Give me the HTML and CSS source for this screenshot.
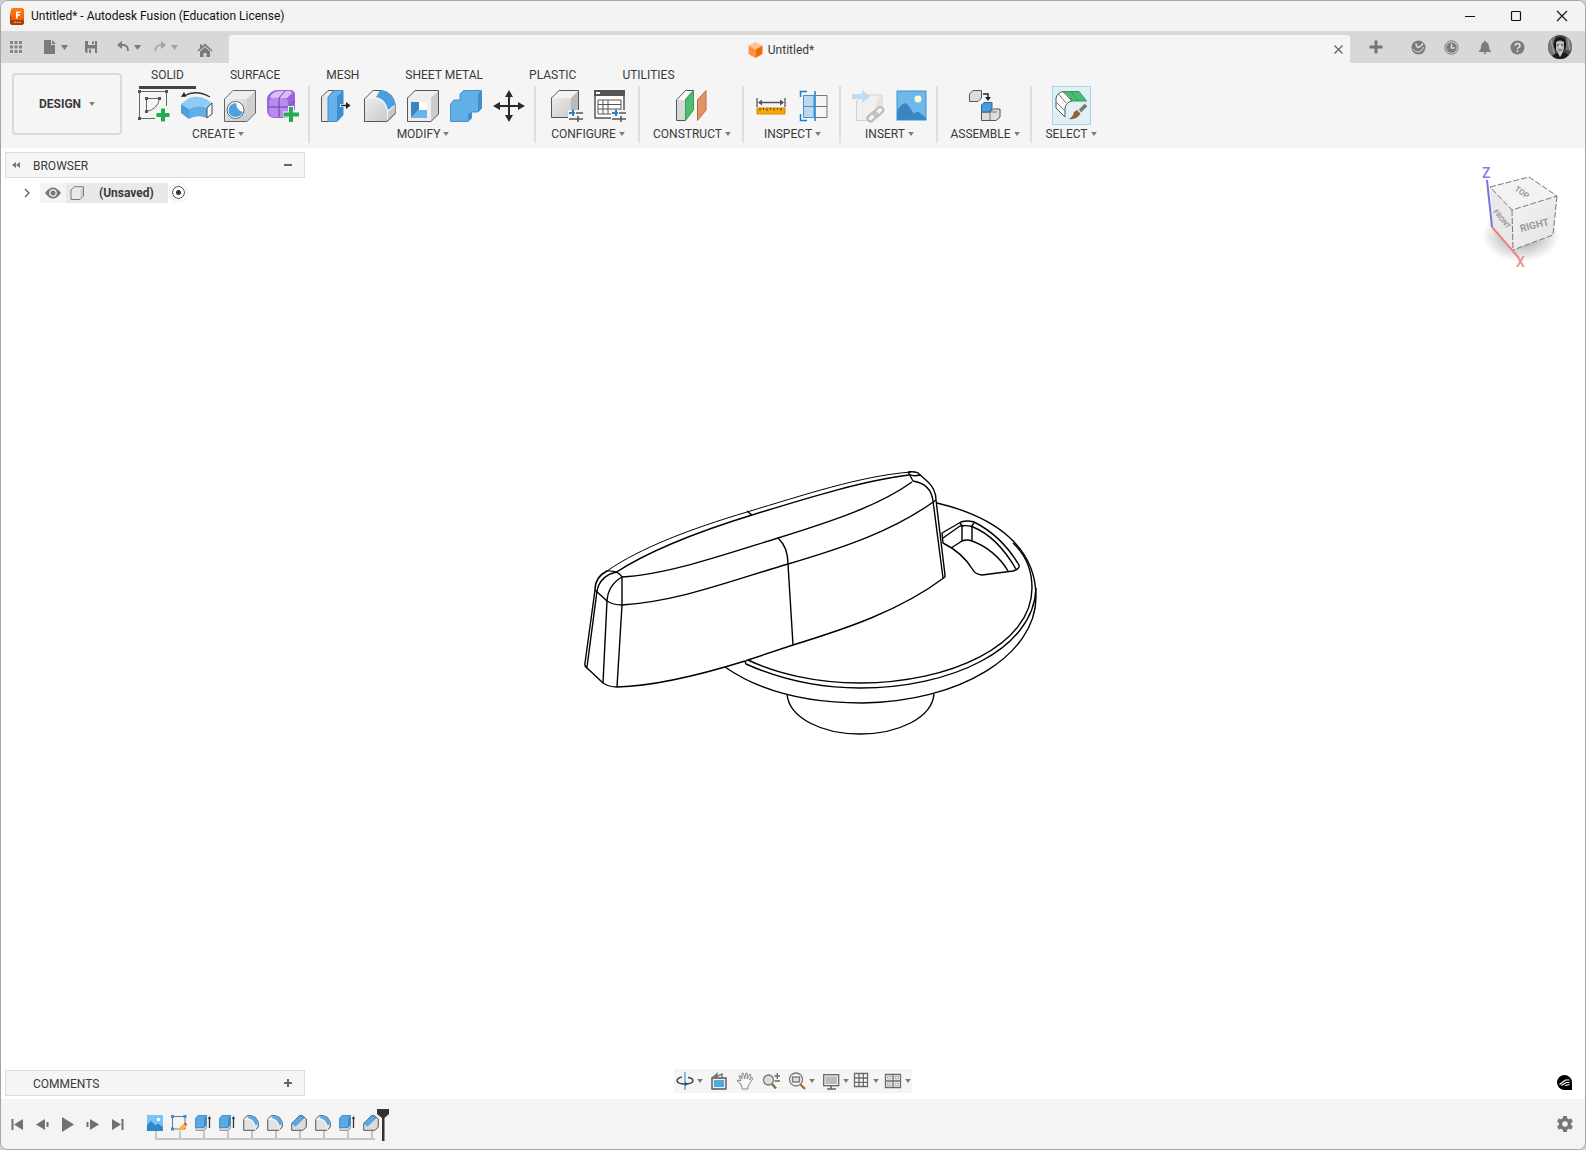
FILE: index.html
```html
<!DOCTYPE html>
<html lang="en">
<head>
<meta charset="utf-8">
<title>Untitled* - Autodesk Fusion (Education License)</title>
<link rel="stylesheet" href="styles.css">
</head>
<body>
<svg class="defs" aria-hidden="true">
  <defs>
    <linearGradient id="orange" x1="0" y1="0" x2="0" y2="1"><stop offset="0" stop-color="#ff7a0f"/><stop offset="1" stop-color="#f06000"/></linearGradient>
    <linearGradient id="metal" x1="0" y1="0" x2="1" y2="1"><stop offset="0" stop-color="#eeeeee"/><stop offset="1" stop-color="#c9c9c9"/></linearGradient>
    <linearGradient id="face" x1="0" y1="0" x2="1" y2="1"><stop offset="0" stop-color="#f4f4f4"/><stop offset="1" stop-color="#e2e2e2"/></linearGradient>
    <radialGradient id="shade"><stop offset="0" stop-color="#000" stop-opacity=".4"/><stop offset=".6" stop-color="#000" stop-opacity=".16"/><stop offset="1" stop-color="#000" stop-opacity="0"/></radialGradient>
    <symbol id="caret" viewBox="0 0 7 5"><path d="M0 0H7L3.500 5Z" fill="currentColor"/></symbol>
    <symbol id="t-extrude" viewBox="0 0 16 16"><path d="M1 13L3.500 10.500H12L11 14L9 15.500H1Z" fill="#d0d0d0" stroke="#777" stroke-width=".6"/><path d="M.5 3.500L3 .5H11.500V9L9 12.500H.5Z" fill="#5aaae4" stroke="#2f80bd" stroke-width=".8"/><path d="M9 3.500L11.500 .5V9L9 12.500Z" fill="#3b8bc8"/><path d="M14.500 3V13" stroke="#333" stroke-width="1.300"/><path d="M12.800 4L14.500 .8L16 4Z" fill="#333"/></symbol>
    <symbol id="t-fillet" viewBox="0 0 16 16"><path d="M.7 4L4 .7H8Q15 2 15.300 9V12L12 15.300H.7Z" fill="#e3e3e3" stroke="#555"/><path d="M.7 4H4Q11 4.500 12 11.500V15.300" fill="none" stroke="#fafafa"/><path d="M5.500 .8H8.500Q14.500 2 15.300 8.500L12.500 10.500Q11 4.500 5 3Z" fill="#5aaae4"/></symbol>
    <symbol id="t-chamfer" viewBox="0 0 16 16"><path d="M.7 8.500L8.500 .7H11.500L15.300 4V12L12 15.300H.7Z" fill="#dadada" stroke="#555"/><path d="M1 8L8.500 .8L13 2.800L4.500 11Z" fill="#5aaae4" stroke="#2f80bd" stroke-width=".7"/></symbol>
    <symbol id="t-image" viewBox="0 0 16 16"><path d="M0 0H16V16H0Z" fill="#7cc3f5"/><circle cx="11.500" cy="4.500" r="1.700" fill="#fff"/><path d="M0 10L4 6L8.500 10.500L11 8.500L16 12V16H0Z" fill="#2d88c9"/></symbol>
    <symbol id="t-sketch" viewBox="0 0 16 16"><path d="M1.500 1.500H14V14H1.500Z" fill="none" stroke="#777"/><path d="M0 0H3V3H0ZM12.500 0H15.500V3H12.500ZM0 12.500H3V15.500H0Z" fill="#3a90d0"/><path d="M7.500 15.500L8.500 12.500L13 8.500L15.500 11L11 15Z" fill="#f7b52c"/><path d="M13 8.500L14.500 7.500L16 9.500L15 11Z" fill="#e5343a"/></symbol>
  </defs>
</svg>

<div class="window">
  <header class="titlebar">
    <svg class="app-icon" viewBox="0 0 14 17"><path d="M1 1.500L2.500 0H13V13L1 14Z" fill="url(#orange)"/><path d="M0 2V15.500L1.500 17H12.500L14 15.500V12H1.500Z" fill="#a83d08"/><path d="M2 1H14V12H2Z" fill="url(#orange)"/><path d="M6 3.500H10.500V5H7.700V6.300H10V7.800H7.700V10.500H6Z" fill="#fff"/><path d="M4 14.300H11" stroke="#f1a273" stroke-width="1.200" stroke-dasharray="2 .6"/></svg>
    <h1 class="titlebar-text">Untitled* - Autodesk Fusion (Education License)</h1>
    <div class="window-controls">
      <button aria-label="Minimize"><svg width="12" height="12"><path d="M1 6.500H11" stroke="#111"/></svg></button>
      <button aria-label="Maximize"><svg width="12" height="12"><rect x="1.500" y="1.500" width="9" height="9" rx="1" fill="none" stroke="#111" stroke-width="1.200"/></svg></button>
      <button aria-label="Close window"><svg width="12" height="12"><path d="M1 1L11 11M11 1L1 11" stroke="#111" stroke-width="1.100"/></svg></button>
    </div>
  </header>

  <div class="tabbar">
    <div class="quick">
      <button aria-label="Show data panel"><svg width="14" height="14" fill="#848484"><path d="M1 1h3v3h-3zM5.500 1h3v3h-3zM10 1h3v3h-3zM1 5.500h3v3h-3zM5.500 5.500h3v3h-3zM10 5.500h3v3h-3zM1 10h3v3h-3zM5.500 10h3v3h-3zM10 10h3v3h-3z"/></svg></button>
      <button aria-label="File"><svg width="14" height="14"><path d="M1 0H8V5H12V14H1Z" fill="#7b7b7b"/><path d="M9 0L13 4H9Z" fill="#7b7b7b"/></svg><svg class="caret"><use href="#caret"/></svg></button>
      <button aria-label="Save"><svg width="14" height="14"><path d="M1 1H13V13H2.500L1 11.500Z" fill="#7b7b7b"/><path d="M4 1H11V5H4ZM3.500 8.500H11V13H3.500Z" fill="#d9d9d9"/><path d="M8 1.500H10V4H8ZM5 9.500H7V13H5Z" fill="#7b7b7b"/></svg></button>
      <button aria-label="Undo"><svg width="14" height="12"><path d="M3 4H8Q12 4.500 12 10" fill="none" stroke="#7b7b7b" stroke-width="1.800"/><path d="M6 0V8L1 4Z" fill="#7b7b7b"/></svg><svg class="caret"><use href="#caret"/></svg></button>
      <button class="faded" aria-label="Redo"><svg width="14" height="12"><path d="M11 4H7Q3 4.500 2 10" fill="none" stroke="#a3a3a3" stroke-width="1.600"/><path d="M8 0V8L13 4Z" fill="#a3a3a3"/></svg><svg class="caret"><use href="#caret"/></svg></button>
      <button class="home" aria-label="Home"><svg width="16" height="15"><path d="M8 .5L15.500 7.500L14.500 8.500L8 3L1.500 8.500L.5 7.500L3 5V1.500H5V3.300Z" fill="#7b7b7b"/><path d="M3 8.500L8 4L13 8.500V14H9.500V10H6.500V14H3Z" fill="#7b7b7b"/></svg></button>
    </div>
    <div class="doc-tab">
      <div class="doc-name"><svg width="15" height="16"><path d="M7.500 0L14.500 3.500L7.500 7.500L.5 3.500Z" fill="#ffc299"/><path d="M.5 3.500L7.500 7.500V16L.5 12Z" fill="#ff9146"/><path d="M14.500 3.500L7.500 7.500V16L14.500 12Z" fill="#f66b00"/></svg><span>Untitled*</span></div>
      <button aria-label="Close tab"><svg width="11" height="11"><path d="M1.500 1.500L9.500 9.500M9.500 1.500L1.500 9.500" stroke="#666" stroke-width="1.300"/></svg></button>
    </div>
    <div class="account">
      <button class="new-tab" aria-label="New design"><svg width="14" height="14"><path d="M7 .5V13.500M.5 7H13.500" stroke="#757575" stroke-width="3"/></svg></button>
      <button aria-label="Extensions"><svg width="15" height="15"><circle cx="7.500" cy="7.500" r="7" fill="#7b7b7b"/><path d="M5 3.500Q5 7 8 7.500L12 4" fill="none" stroke="#d9d9d9" stroke-width="1.600"/><path d="M8 7L12.500 2.500M2 9Q4 12.500 8 12Q12 11 12.500 7" fill="none" stroke="#d9d9d9"/></svg></button>
      <button aria-label="Job status"><svg width="15" height="15"><circle cx="7.500" cy="7.500" r="6.700" fill="none" stroke="#7b7b7b"/><circle cx="7.500" cy="7.500" r="5.300" fill="#7b7b7b"/><path d="M7.500 3.500V8H11" fill="none" stroke="#d9d9d9" stroke-width="1.500"/></svg></button>
      <button aria-label="Notifications"><svg width="14" height="15"><path d="M7 .5Q8 .5 8 2Q11 3 11 7Q11 10 13 11V12H1V11Q3 10 3 7Q3 3 6 2Q6 .5 7 .5ZM5.500 12.500H8.500Q8.500 14 7 14T5.500 12.500Z" fill="#7b7b7b"/></svg></button>
      <button aria-label="Help"><svg width="15" height="15"><circle cx="7.500" cy="7.500" r="7" fill="#7b7b7b"/><path d="M5 5.800Q5.200 3.500 7.500 3.500T10 5.700Q10 7 8.500 7.600Q7.500 8 7.500 9.300" fill="none" stroke="#e4e4e4" stroke-width="1.500"/><circle cx="7.500" cy="11.300" r="1" fill="#e4e4e4"/></svg></button>
      <button class="avatar" aria-label="My profile"><svg width="24" height="24" viewBox="0 0 24 24"><clipPath id="round"><circle cx="12" cy="12" r="12"/></clipPath><g clip-path="url(#round)"><path d="M0 0H24V24H0Z" fill="#4b4b4b"/><path d="M0 2H7V20H0ZM18 3H24V15H18Z" fill="#777"/><path d="M3 5L6 18M20 4L22 16" stroke="#aaa"/><path d="M6 13Q4 3 11 2Q19 1 18 12L16 16H8Z" fill="#171717"/><path d="M8 7Q12 4 16 7L16 14L14 18L11 19L8 15Z" fill="#b9b9b9"/><path d="M8.500 10H11M13 10H15.500M10.500 15H13.500" stroke="#444"/><path d="M12 10V13" stroke="#eee"/><path d="M3 24Q5 18 10 18L12 20L15 17Q21 18 22 24Z" fill="#1c1c1c"/><path d="M10 18L12 22L15 17Z" fill="#ccc"/></g></svg></button>
    </div>
  </div>

  <div class="ribbon">
    <button class="workspace">DESIGN<svg class="caret"><use href="#caret"/></svg></button>
    <div class="ribbon-main">
      <nav class="ribbon-tabs">
        <button class="active">SOLID</button><button>SURFACE</button><button>MESH</button><button>SHEET METAL</button><button>PLASTIC</button><button>UTILITIES</button>
      </nav>
      <div class="groups">
        <section class="group four">
          <div class="tools">
            <button aria-label="Create sketch"><svg class="tool"><path d="M1.500 1.500H28.500V16M1.500 1.500V28.500H17" fill="none" stroke="#666"/><path d="M8.500 8.500H21.500M8.500 8.500V21.500Q20 19 21.500 8.500" fill="none" stroke="#666"/><path d="M0 0h3v3h-3zM27 0h3v3h-3zM0 27h3v3h-3zM7 7h3v3h-3zM20 7h3v3h-3zM7 20h3v3h-3z" fill="#555"/><path d="M25 17V32M17 25H32" stroke="#f5f5f5" stroke-width="6"/><path d="M25 18.500V31.500M18.500 25H31.500" stroke="#22ad52" stroke-width="4"/></svg></button>
            <button aria-label="Revolve"><svg class="tool"><path d="M0 14L8 8Q17 5 25 9L31 13L26 18Q15 14 8 19Z" fill="#8fcbf5"/><path d="M0 14L8 19V29L0 23Z" fill="#4d9fdb"/><path d="M8 19Q16 14 26 18V28Q16 24 8 29Z" fill="#5fafe7"/><path d="M26 18L31 13V24L26 28Z" fill="#fff" stroke="#444"/><path d="M3 6Q15-1 29 7" fill="none" stroke="#333" stroke-width="1.300"/><path d="M0 7L3 2L5.500 6.500Z" fill="#222"/></svg></button>
            <button aria-label="Hole"><svg class="tool"><path d="M.5 9L9 .5H31.500V23L23 31.500H.5Z" fill="#efefef"/><path d="M23 9L31.500 .5V23L23 31.500Z" fill="#d0d0d0"/><path d="M.5 9H23V31.500H.5Z" fill="url(#metal)"/><path d="M.5 9L9 .5H31.500V23L23 31.500H.5Z" fill="none" stroke="#666"/><circle cx="11.500" cy="20" r="8.500" fill="#fff" stroke="#666"/><path d="M12 13Q13 21 19 22Q17 27 11 27Q4.500 26 4.500 20Q5 13.500 12 13Z" fill="#4ba3e2"/></svg></button>
            <button aria-label="Create form"><svg class="tool"><path d="M0 8Q3 0 11 0H24Q29 1 28 7V19Q25 28 18 28H7Q0 27 0 20Z" fill="#9a66d9"/><path d="M4 5Q8 1 13 1H23Q27 2 23 5L20 8H3Z" fill="#d9bdf8"/><path d="M2 12Q2 8 7 8H16Q21 8 21 13V20Q21 27 16 27H8Q2 27 2 22Z" fill="#b98bec"/><path d="M1 17H21L28 11M12 27V8L18 1" fill="none" stroke="#6f39b0"/><path d="M24 16V32M16 24.500H32" stroke="#f5f5f5" stroke-width="6"/><path d="M24 17V32M16.500 24.500H32" stroke="#22ad52" stroke-width="4"/></svg></button>
          </div>
          <button class="group-label">CREATE<svg class="caret"><use href="#caret"/></svg></button>
        </section>
        <section class="group five">
          <div class="tools">
            <button aria-label="Press pull"><svg class="tool"><path d="M.5 7L7 .5H13L8 7V31.500H.5Z" fill="#e8e8e8" stroke="#555"/><path d="M7 7L13 .5H22V25L16 31.500H7Z" fill="#67b0e8" stroke="#3e8cc7"/><path d="M16 7L22 .5V25L16 31.500Z" fill="#3b8ed0"/><path d="M19 15.500H26" stroke="#fff" stroke-width="3"/><path d="M20 15.500H27" stroke="#222" stroke-width="1.500"/><path d="M25 12L29.500 15.500L25 19Z" fill="#222"/></svg></button>
            <button aria-label="Fillet"><svg class="tool"><path d="M.5 9L9 .5H17Q29 2 31.500 16V23L23 31.500H.5Z" fill="#f3f3f3" stroke="#555"/><path d="M.5 9H10Q22 10 23 23V31.500H.5Z" fill="url(#metal)"/><path d="M24 22L31.500 15V23L24 31Z" fill="#c9c9c9"/><path d="M.5 9V31.500H23L31.500 23" fill="none" stroke="#555"/><path d="M16 .5Q29 1 31.500 14L24 20Q22 9 12 7Z" fill="#4b9fdf"/></svg></button>
            <button aria-label="Shell"><svg class="tool"><path d="M.5 8L8 .5H31.500V24L24 31.500H.5Z" fill="#eee"/><path d="M24 8L31.500 .5V24L24 31.500Z" fill="#ccc"/><path d="M.5 8L8 .5H31.500V24L24 31.500H.5Z" fill="none" stroke="#555"/><path d="M4 12H20V28H4Z" fill="#fff"/><path d="M4 12H12V20L4 28Z" fill="#3984c2"/><path d="M4 28L11 20H20V28Z" fill="#66b6ed"/></svg></button>
            <button aria-label="Combine"><svg class="tool"><path d="M.5 14L4 10H10V4L13.500 .5H31.500V18.500L28 22H21.500V28L18 31.500H.5Z" fill="#62aee7" stroke="#4593cf"/><path d="M28 4L31.500 .5V18.500L28 22ZM18 24L21.500 22V28L18 31.500Z" fill="#418fcd"/></svg></button>
            <button aria-label="Move"><svg class="tool"><path d="M16 5V27M5 16H27" stroke="#2b2b2b" stroke-width="2"/><path d="M16 0L20 7H12ZM16 32L20 25H12ZM0 16L7 12V20ZM32 16L25 12V20Z" fill="#2b2b2b"/></svg></button>
          </div>
          <button class="group-label">MODIFY<svg class="caret"><use href="#caret"/></svg></button>
        </section>
        <section class="group wide">
          <div class="tools">
            <button aria-label="Configure model"><svg class="tool"><path d="M.5 8L8 .5H27.500V20L20 27.500H.5Z" fill="#f4f4f4"/><path d="M.5 8H20V27.500H.5Z" fill="url(#metal)"/><path d="M20 8L27.500 .5V20L20 27.500Z" fill="#bbb"/><path d="M.5 8L8 .5H27.500V20L20 27.500H.5Z" fill="none" stroke="#555"/><path d="M17 23H33M17 29H33" stroke="#f5f5f5" stroke-width="6"/><path d="M18 23H24" stroke="#2784cc" stroke-width="2"/><path d="M22 19.500V26" stroke="#2784cc" stroke-width="2"/><path d="M25 23H32M18 29H32M27 26V32" stroke="#555" stroke-width="1.600"/></svg></button>
            <button aria-label="Configuration table"><svg class="tool"><path d="M1 1H30V28H1Z" fill="#fff" stroke="#555" stroke-width="1.500"/><path d="M0 0H31V6H0Z" fill="#555"/><path d="M2 2H6V4H2Z" fill="#fff"/><path d="M4 10H27V24H4ZM4 14.500H27M4 19H27M9 10V24M14 10V24" fill="none" stroke="#555"/><path d="M17 23H33M17 29H33" stroke="#f5f5f5" stroke-width="6"/><path d="M18 23H24M22 19.500V26" stroke="#2784cc" stroke-width="2"/><path d="M25 23H32M18 29H32M27 26V32" stroke="#555" stroke-width="1.600"/></svg></button>
          </div>
          <button class="group-label">CONFIGURE<svg class="caret"><use href="#caret"/></svg></button>
        </section>
        <section class="group wide">
          <div class="tools">
            <button aria-label="Offset plane"><svg class="tool"><path d="M.500 10L9.500 .5H17.500L9 10V30.500H.5Z" fill="#fafafa" stroke="#555"/><path d="M1 10H9V30H1Z" fill="#d8d8d8"/><path d="M9.500 10L17.500 .5V20L9.500 30.500Z" fill="#4dbd74" stroke="#339f58"/><path d="M21.500 10L30 .5V20L21.500 30.500Z" fill="#e39465" stroke="#bd6c3d"/></svg></button>
          </div>
          <button class="group-label">CONSTRUCT<svg class="caret"><use href="#caret"/></svg></button>
        </section>
        <section class="group">
          <div class="tools">
            <button aria-label="Measure"><svg class="tool"><path d="M2 8V17M30 8V17M4 12.500H28" stroke="#555" stroke-width="1.300"/><path d="M3 12.500L7 9.500V15.500ZM29 12.500L25 9.500V15.500Z" fill="#555"/><path d="M2 18H30V24H2Z" fill="#f7a708" stroke="#d68b00"/><path d="M5 18v3M8.500 18v2M12 18v3M15.500 18v2M19 18v3M22.500 18v2M26 18v3" stroke="#6b4a00"/></svg></button>
            <button aria-label="Section analysis"><svg class="tool"><path d="M17 5.500H29V27.500H17M17 16.500H29" fill="none" stroke="#777"/><path d="M5 5H16V28H5Z" fill="#b9d8f1"/><path d="M5.500 5.500H16V27.500H5.500ZM5 16.500H16" fill="none" stroke="#4a8fc8"/><path d="M9 1.500H2.500V7M2.500 24V30.500H9M17 1V31" fill="none" stroke="#1581cf" stroke-width="1.500"/></svg></button>
          </div>
          <button class="group-label">INSPECT<svg class="caret"><use href="#caret"/></svg></button>
        </section>
        <section class="group">
          <div class="tools">
            <button aria-label="Insert component" class="dim"><svg class="tool"><path d="M4.500 11L11 5H30V22L24 30.500H4.500Z" fill="#eee" stroke="#bbb"/><path d="M24 11L30 5V22L24 30Z" fill="#dadada"/><path d="M0 4H10V0L18 6.500L10 13V9H0Z" fill="#9dcdf2"/><path d="M18 31L32 19" stroke="#f5f5f5" stroke-width="11"/><g fill="none" stroke="#999" stroke-width="2.200"><rect x="15" y="24" width="11" height="6" rx="3" transform="rotate(-42 20 27)"/><rect x="21" y="19" width="11" height="6" rx="3" transform="rotate(-42 26 22)"/></g></svg></button>
            <button aria-label="Canvas image"><svg class="tool"><path d="M2 1H31V30H2Z" fill="#6fb8ec"/><circle cx="23" cy="9" r="3.500" fill="#fff9d3"/><path d="M2 21Q8 11 12 14Q15 17 17 21L19 24Q22 20 25 23L31 28V30H2Z" fill="#3786bf"/><rect x="2" y="1" width="29" height="29" fill="none" stroke="#3b93d2"/></svg></button>
          </div>
          <button class="group-label">INSERT<svg class="caret"><use href="#caret"/></svg></button>
        </section>
        <section class="group narrow">
          <div class="tools">
            <button aria-label="New component"><svg class="tool"><path d="M.5 4L4 .5H12.500V8L9 11.500H.5Z" fill="#ddd" stroke="#555"/><path d="M14 4H19V8" fill="none" stroke="#222" stroke-width="1.500"/><path d="M16 7H22L19 11Z" fill="#222"/><path d="M12.500 22H21L24.500 19H31V27L27 30.500H12.500Z" fill="#ddd" stroke="#555"/><path d="M21 22V30M21 22H28" stroke="#777"/><path d="M12.500 15L15 12.500H23V19L20.500 22H12.500Z" fill="#4b9bdc" stroke="#2e6999"/></svg></button>
          </div>
          <button class="group-label">ASSEMBLE<svg class="caret"><use href="#caret"/></svg></button>
        </section>
        <section class="group last">
          <div class="tools">
            <button aria-label="Select" class="selected"><svg class="tool"><path d="M8 1.500Q2 3 1 8V18L10 27V18Q11 12 17 11Z" fill="#fff" stroke="#555"/><path d="M1 12L10 21M3.500 4L11 13" stroke="#777"/><path d="M8 1.500H24L31.500 11H17Q14 4 8 1.500Z" fill="#4abd75" stroke="#329b58"/><path d="M16 1.500L24 11" stroke="#329b58"/><path d="M31 15L25 21" stroke="#777" stroke-width="3.500"/><path d="M22 20L25.500 23.500Q22 30 14 29Q18 27 19 22Z" fill="#936430"/></svg></button>
          </div>
          <button class="group-label">SELECT<svg class="caret"><use href="#caret"/></svg></button>
        </section>
      </div>
    </div>
  </div>

  <main class="canvas">
    <svg class="model" viewBox="580 460 460 280" role="img" aria-label="Knob body">
      <g fill="none" stroke="#000" stroke-width="1.400" stroke-linejoin="round">
        <path stroke-width="1" d="M607 571C640 548 690 529 747 512S860 476 911 472"/>
        <path d="M615 573C650 550 700 531 752 515S865 480 909 475M747 511L752 515"/>
        <path d="M622 577C665 575 720 556 778 538S880 505 912 482"/>
        <path d="M595 590L607 601Q613 605 622 605C680 601 730 581 788 564S895 530 936 500"/>
        <path d="M606 571Q618 570 622 577L622 605L617 687M607 571Q595 577 595 590L585 663Q584 666 588 669"/>
        <path d="M616 572Q600 576 597 591L587 667M622 577Q608 585 607 601L603 683"/>
        <path d="M585 666L603 683Q609 687 617 687C655 686 700 675 745 661"/>
        <path d="M748 660L793 645C845 629 900 611 945 577"/>
        <path d="M778 538Q788 547 788 564L793 645"/>
        <path d="M908 472Q917 471 919 474L927 481Q936 489 936 500L945 575V577M908 472L913 481Q931 484 933 501L943 578M909 474Q913 477 920 475"/>
        <path d="M937 503C1000 518 1036 550 1036 597C1036 655 960 702 862 703C800 703 755 688 725 667"/>
        <path d="M1013 543C1028 557 1032 572 1032 588C1032 645 950 683 860 683C815 683 775 673 748 660"/>
        <path d="M1036 588C1034 650 950 688 860 688C815 688 775 677 746 664Q744 661 748 660"/>
        <path d="M787 694C789 718 822 734 860 734S932 718 934 694"/>
        <path d="M942 533L961 522Q967 520 974 522C990 530 1007 545 1019 565Q1020 569 1013 571L982 575Q975 574 973 570Q963 553 943 543Z"/>
        <path d="M943 538L960 526Q967 525 973 527C988 533 1003 547 1016 569"/>
        <path d="M951 548L962 541Q967 539 972 541C986 546 1000 557 1008 571M962 526V541M972 527V541M960 523L963 527M974 523L971 527"/>
      </g>
    </svg>

    <div class="canvas-top">
      <aside class="browser">
        <div class="panel-head">
          <button class="collapse" aria-label="Collapse browser"><svg width="8" height="6"><path d="M4 0V6L0 3ZM8 0V6L4 3Z" fill="#777"/></svg></button>
          <h2>BROWSER</h2>
          <button aria-label="Minimize browser"><svg width="10" height="10"><path d="M1 5H9" stroke="#666" stroke-width="2"/></svg></button>
        </div>
        <div class="tree-row">
          <button class="expand" aria-label="Expand"><svg width="6" height="10"><path d="M1 1L5 5L1 9" fill="none" stroke="#555" stroke-width="1.200"/></svg></button>
          <button class="eye" aria-label="Toggle visibility"><svg width="16" height="12"><path d="M0 6Q8-5 16 6Q8 17 0 6Z" fill="#777"/><circle cx="8" cy="6" r="3.800" fill="#f5f5f5"/><circle cx="8" cy="6" r="2.500" fill="#777"/></svg></button>
          <div class="node"><svg width="15" height="15"><path d="M1 4L4.500 .7H13.500V10L10 13.500H1Z" fill="#e9e9e9" stroke="#777" stroke-linejoin="round"/><path d="M10.500 4L13 1V10L10.500 12.500Z" fill="#cfcfcf"/></svg><span>(Unsaved)</span></div>
          <input type="radio" class="activate" aria-label="Activate component" checked>
        </div>
      </aside>
      <svg class="viewcube" viewBox="1470 160 100 112" role="img" aria-label="View cube">
        <ellipse cx="1521" cy="236" rx="39" ry="26" fill="url(#shade)"/>
        <path d="M1490 187L1529 177L1557 196L1512 210Z" fill="#f3f3f3"/>
        <path d="M1490 187L1512 210L1513 250L1492 227Z" fill="#e9e9e9"/>
        <path d="M1512 210L1557 196L1553 235L1513 250Z" fill="url(#face)"/>
        <path d="M1490 187L1529 177L1557 196L1512 210ZM1512 210L1513 250M1557 196L1553 235L1513 250" fill="none" stroke="#777" stroke-dasharray="6 2"/>
        <path d="M1487 180L1492 227" stroke="#7373e6" stroke-width="2"/>
        <path d="M1492 227L1519 258" stroke="#ef8080" stroke-width="2"/>
        <text x="1482" y="178" class="axis">Z</text>
        <text x="1516" y="267" class="axis axis-x">X</text>
        <text transform="translate(1521 232) rotate(-14)" class="face-right">RIGHT</text>
        <text transform="translate(1514 190) rotate(35)" class="face-top">TOP</text>
        <text transform="translate(1493 212) rotate(50)" class="face-front">FRONT</text>
      </svg>
    </div>

    <div class="canvas-bottom">
      <div class="panel-head comments">
        <h2>COMMENTS</h2>
        <button aria-label="Add comment"><svg width="10" height="10"><path d="M1 5H9M5 1V9" stroke="#666" stroke-width="2"/></svg></button>
      </div>
      <div class="navbar">
        <button aria-label="Orbit"><svg width="18" height="18"><path d="M9 0V18" stroke="#7fc0ee" stroke-width="2"/><path d="M6 5Q1 6 1 9Q2 12 9 12Q16 12 17 9Q17 6 12 5.500" fill="none" stroke="#444" stroke-width="1.400"/><path d="M9 10L12 12L9 14Z" fill="#444"/></svg><svg class="caret"><use href="#caret"/></svg></button>
        <button aria-label="Look at"><svg width="18" height="18"><path d="M2 6H16V17H2Z" fill="#eee" stroke="#555" stroke-width="1.400"/><path d="M4 8H14V15H4Z" fill="#4fa8e4"/><path d="M2 6L7 2L6 5L12 2V6" fill="none" stroke="#666" stroke-width="1.300"/></svg></button>
        <button aria-label="Pan"><svg width="18" height="18"><path d="M6 16L5 12L1 9Q1 7 5 9L3 4Q4 2 6 7L6 1Q8 0 8.500 7L10 1Q12 0 11 7L14 2Q16 2 13.500 8L15 6Q18 5 16 8L12 14V17H6Z" fill="#fafafa" stroke="#888"/></svg></button>
        <button aria-label="Zoom"><svg width="18" height="18"><circle cx="6.500" cy="8" r="5" fill="#ddd" stroke="#777" stroke-width="1.300"/><path d="M10 12L14 16.500" stroke="#7a7a3c" stroke-width="2.500"/><path d="M12.500 4H18M15.300 1V7M12.500 9H18" stroke="#666" stroke-width="1.300"/></svg></button>
        <button aria-label="Zoom window"><svg width="18" height="18"><circle cx="8" cy="7.500" r="6.500" fill="#f5f5f5" stroke="#777" stroke-width="1.300"/><rect x="4.500" y="5" width="7" height="5" fill="#ddd" stroke="#777" stroke-width="1.300"/><path d="M12.500 12.500L17 17" stroke="#a2713a" stroke-width="2.300"/></svg><svg class="caret"><use href="#caret"/></svg></button>
        <button aria-label="Display settings"><svg width="18" height="18"><rect x="1.700" y="2.700" width="15" height="11" fill="#eee" stroke="#666" stroke-width="1.300"/><path d="M3.500 4.500H15V12H3.500Z" fill="#bbb"/><path d="M9 14V17M5 17H14" stroke="#666" stroke-width="1.600"/></svg><svg class="caret"><use href="#caret"/></svg></button>
        <button aria-label="Grid and snaps"><svg width="18" height="18"><path d="M2.500 1.500H15.500V14.500H2.500ZM7 1.500V14.500M11.300 1.500V14.500M2.500 6H15.500M2.500 10.300H15.500" fill="#fafafa" stroke="#6a6a6a" stroke-width="1.300"/></svg><svg class="caret"><use href="#caret"/></svg></button>
        <button aria-label="Viewports"><svg width="18" height="18"><path d="M1.500 2.500H16.500V15.500H1.500ZM9 2.500V15.500M1.500 9H16.500" fill="#fafafa" stroke="#6a6a6a" stroke-width="1.300"/><path d="M3.500 4.500H7V7H3.500ZM11 4.500H14.500V7H11ZM3.500 11H7V13.500H3.500ZM11 11H14.500V13.500H11Z" fill="#eee" stroke="#999" stroke-width=".7"/></svg><svg class="caret"><use href="#caret"/></svg></button>
      </div>
      <button class="assistant" aria-label="Autodesk Assistant"><svg width="15" height="15"><path d="M7.500 0A7.500 7.500 0 0 1 15 7.500V15H7.500A7.500 7.500 0 0 1 7.500 0Z" fill="#000"/><path d="M2.500 9.500L8.500 5H12.500M4.500 10.500L9 7.500H12.500M8 10.500L12.500 9.500" fill="none" stroke="#fff" stroke-width="1.200"/></svg></button>
    </div>
  </main>

  <footer class="timeline">
    <div class="playback">
      <button aria-label="Go to start"><svg width="13" height="13"><path d="M1.500 1V12" stroke="#707070" stroke-width="2"/><path d="M12 1V12L3 6.500Z" fill="#707070"/></svg></button>
      <button aria-label="Step back"><svg width="13" height="13"><path d="M9 1V12L0 6.500Z" fill="#707070"/><path d="M11.500 4V9" stroke="#707070" stroke-width="2"/></svg></button>
      <button aria-label="Play"><svg width="13" height="15"><path d="M1 0L13 7.500L1 15Z" fill="#707070"/></svg></button>
      <button aria-label="Step forward"><svg width="13" height="13"><path d="M4 1V12L13 6.500Z" fill="#707070"/><path d="M1.500 4V9" stroke="#707070" stroke-width="2"/></svg></button>
      <button aria-label="Go to end"><svg width="13" height="13"><path d="M11.500 1V12" stroke="#707070" stroke-width="2"/><path d="M1 1V12L10 6.500Z" fill="#707070"/></svg></button>
    </div>
    <div class="history">
      <div class="features">
        <button aria-label="Canvas"><svg><use href="#t-image"/></svg></button>
        <button aria-label="Sketch"><svg><use href="#t-sketch"/></svg></button>
        <button aria-label="Extrude 1"><svg><use href="#t-extrude"/></svg></button>
        <button aria-label="Extrude 2"><svg><use href="#t-extrude"/></svg></button>
        <button aria-label="Fillet 1"><svg><use href="#t-fillet"/></svg></button>
        <button aria-label="Fillet 2"><svg><use href="#t-fillet"/></svg></button>
        <button aria-label="Chamfer 1"><svg><use href="#t-chamfer"/></svg></button>
        <button aria-label="Fillet 3"><svg><use href="#t-fillet"/></svg></button>
        <button aria-label="Extrude 3"><svg><use href="#t-extrude"/></svg></button>
        <button aria-label="Chamfer 2"><svg><use href="#t-chamfer"/></svg></button>
      </div>
      <svg class="marker" width="12" height="32"><path d="M0 0H12V5L7.500 9V32H5V9L0 5Z" fill="#333"/></svg>
    </div>
    <button class="settings" aria-label="Timeline settings"><svg width="18" height="18" viewBox="0 0 18 18"><circle cx="9" cy="9" r="4.500" fill="none" stroke="#777" stroke-width="3.400"/><path d="M9 1V4M9 14V17M2 5L4.700 6.500M13.300 11.500L16 13M2 13L4.700 11.500M13.300 6.500L16 5" stroke="#777" stroke-width="4"/></svg></button>
  </footer>
</div>
</body>
</html>
```
FILE: styles.css
```css
* { box-sizing: border-box; }

body {
  margin: 0;
  background: #cfcfcf;
  color: #3a3a3a;
  font: 12px/16px Roboto, "Liberation Sans", sans-serif;
}

h1, h2 { margin: 0; font: inherit; }
svg { display: block; flex: none; }

button {
  display: flex;
  align-items: center;
  justify-content: center;
  padding: 0;
  border: 0;
  background: none;
  color: inherit;
  font: inherit;
}

.defs { position: absolute; width: 0; height: 0; }
.caret { width: 6px; height: 4px; color: #7b7b7b; }

.window {
  display: flex;
  flex-direction: column;
  min-height: 100vh;
  overflow: hidden;
  border: 1px solid #a6a6a6;
  border-radius: 8px;
  background: #fff;
}

/* Title bar */
.titlebar {
  display: flex;
  align-items: center;
  height: 30px;
  padding-left: 9px;
  background: #f3f3f3;
}
.app-icon { width: 14px; height: 17px; }
.titlebar-text {
  flex: 1;
  margin-left: 7px;
  color: #111;
}
.window-controls { display: flex; }
.window-controls button { width: 46px; height: 30px; }

/* Quick access, document tab, account */
.tabbar {
  display: flex;
  height: 32px;
  background: #d8d8d8;
}
.quick {
  display: grid;
  grid-template-columns: 34px 41px 32px 37px 44px 32px;
  width: 228px;
  padding: 0 0 0 8px;
}
.quick button { justify-content: flex-start; gap: 4px; }
.quick .caret { width: 7px; height: 5px; }
.quick .faded .caret { color: #a3a3a3; }
.quick .home { padding-top: 6px; }
.doc-tab {
  display: flex;
  flex: 1;
  align-items: center;
  margin-top: 4px;
  padding-right: 6px;
  border-radius: 3px 3px 0 0;
  background: #f5f5f5;
}
.doc-name {
  display: flex;
  flex: 1;
  align-items: center;
  justify-content: center;
  gap: 5px;
  padding-top: 1px;
}
.account { display: flex; }
.account button { width: 33px; }
.account .new-tab { width: 52px; }
.account .avatar { width: 51px; }

/* Ribbon */
.ribbon {
  display: flex;
  height: 85px;
  background: #f5f5f5;
}
.workspace {
  gap: 8px;
  width: 110px;
  height: 62px;
  margin: 10px 12px 0 11px;
  border: 2px solid #d9d9d9;
  border-radius: 4px;
  font-weight: 700;
}
.ribbon-main { flex: 1; }
.ribbon-tabs {
  display: flex;
  gap: 22px;
  padding-left: 5px;
}
.ribbon-tabs button {
  height: 26px;
  padding: 0 12px;
  border-bottom: 3px solid transparent;
}
.ribbon-tabs .active { border-color: #444; }
.groups { display: flex; margin-top: -3px; }
.group {
  display: flex;
  flex-direction: column;
  align-items: center;
  width: 97px;
  height: 57px;
  padding-left: 2px;
  border-right: 2px solid #dedede;
}
.group.four { width: 176px; padding: 0 6px 0 0; }
.group.five { width: 226px; }
.group.wide { width: 104px; }
.group.narrow { width: 94px; }
.group.last { width: 76px; border: 0; }
.tools { display: flex; gap: 4px; }
.tools button {
  width: 39px;
  height: 39px;
  border: 1px solid transparent;
}
.tool { width: 32px; height: 32px; overflow: visible; }
.tools .selected { border-color: #a6d5e8; background: #e1f0f6; }
.dim { opacity: .6; }
.group-label { gap: 3px; height: 20px; }

/* Canvas */
.canvas {
  position: relative;
  display: flex;
  flex: 1;
  flex-direction: column;
  justify-content: space-between;
  padding: 4px 4px 3px;
  background: #fff;
}
/* The model sits on the free canvas, beneath the panels */
.model {
  position: absolute;
  top: 312px;
  left: calc(50% - 213px);
  width: 460px;
  height: 280px;
}
.canvas-top, .canvas-bottom {
  position: relative;
  display: flex;
  justify-content: space-between;
}
.browser { width: 300px; }
.panel-head {
  display: flex;
  align-items: center;
  height: 26px;
  padding: 0 11px 0 27px;
  border: 1px solid #dcdcdc;
  background: #f5f5f5;
}
.panel-head h2 { flex: 1; padding-top: 2px; }
.browser .panel-head { padding-left: 6px; }
.collapse { width: 21px; justify-content: flex-start; }

.tree-row {
  display: flex;
  height: 20px;
  margin-top: 5px;
  padding-left: 19px;
}
.expand { width: 6px; margin-right: 10px; }
.eye { width: 26px; background: #f5f5f5; }
.node {
  display: flex;
  align-items: center;
  gap: 14px;
  width: 102px;
  padding-left: 4px;
  background: #e9e9e9;
  font-weight: 700;
}
.activate {
  appearance: none;
  width: 13px;
  height: 13px;
  margin: 3px 0 0 4px;
  border: 1px solid #333;
  border-radius: 50%;
  outline: 4px solid #f7f7f7;
  outline-offset: 0;
  background: radial-gradient(circle, #333 0 2px, #fff 3px);
}

.viewcube { width: 100px; height: 112px; margin: 8px 11px 0 0; }
.axis { fill: #8080ea; font: 500 14px Roboto, sans-serif; }
.axis-x { fill: #f08c8c; }
.face-right { fill: #999; font: 700 10px Roboto, sans-serif; }
.face-top { fill: #999; font: 700 8px Roboto, sans-serif; }
.face-front { fill: #999; font: 700 7px Roboto, sans-serif; }

.canvas-bottom {
  display: grid;
  grid-template-columns: 1fr auto 1fr;
  align-items: center;
}
.comments { width: 300px; }
.navbar {
  display: grid;
  grid-template-columns: 34px 26px 26px 26px 34px 30px 32px 28px;
  height: 24px;
  margin-bottom: 3px;
  padding-left: 2px;
  background: #f5f5f5;
}
.navbar button { justify-content: flex-start; gap: 3px; }
.assistant { justify-self: end; margin-right: 9px; }

/* Timeline */
.timeline {
  display: flex;
  align-items: flex-start;
  height: 50px;
  padding: 10px 11px 0 4px;
  background: #f4f4f4;
}
.playback { display: flex; }
.playback button { width: 25px; height: 30px; }
.history { display: flex; flex: 1; margin-left: 13px; }
.features { display: flex; }
.features button {
  position: relative;
  align-items: flex-start;
  width: 24px;
  height: 31px;
  padding-top: 6px;
}
.features svg { width: 16px; height: 16px; }
/* Track below the icons, with a tick under each feature */
.features button::before {
  content: "";
  position: absolute;
  bottom: 0;
  left: 12px;
  width: 24px;
  height: 7px;
  border: solid #c6c6c6;
  border-width: 0 0 2px 2px;
}
.features button:last-child::before { width: 2px; }
.marker { margin-left: -6px; position: relative; }
.settings { margin-top: 6px; }
```
